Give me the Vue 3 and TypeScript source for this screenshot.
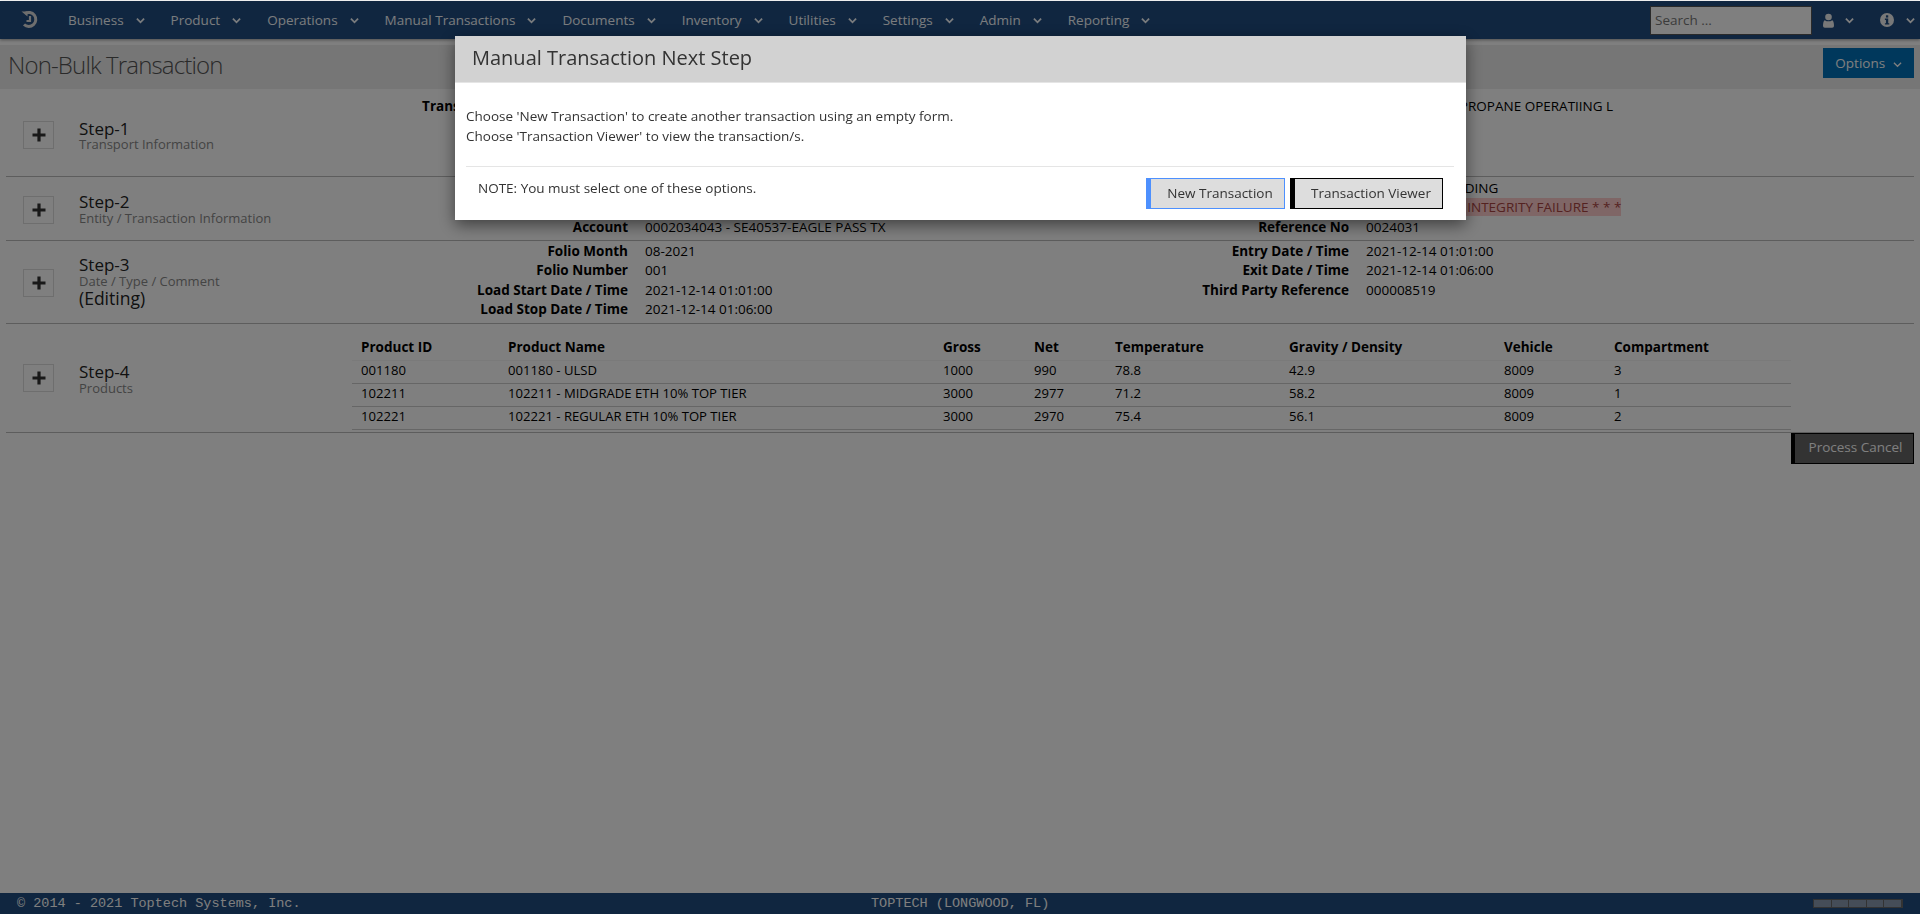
<template>
  <div class="page">
    <nav class="topNav">
      <svg class="logo" viewBox="0 0 20 20" width="20" height="20" fill="none" stroke="currentColor">
        <path d="M5 3.5 A7 7 0 1 1 4 14.5" stroke-width="3" />
        <path d="M1.5 1.5 H7.5 V6.5 Z" fill="currentColor" stroke="none" />
        <path d="M10 6 V11 H6.5" stroke-width="2.2" />
      </svg>
      <a v-for="item in menuItems" :key="item" class="navItem">
        {{ item }}
        <svg class="chev" viewBox="0 0 10 7" width="9" height="7"><path d="M1 1.5 L5 5.5 L9 1.5" /></svg>
      </a>
      <input class="searchBox" placeholder="Search ..." />
      <svg class="navIcon userIcon" viewBox="0 0 12 16" width="11" height="15" fill="currentColor">
        <circle cx="6" cy="4.2" r="3.6" />
        <path d="M1.8 7.6 Q6 10.2 10.2 7.6 Q12 9 12 14 Q12 16 10 16 H2 Q0 16 0 14 Q0 9 1.8 7.6 Z" />
      </svg>
      <svg class="chev chevUser" viewBox="0 0 10 7" width="9" height="7"><path d="M1 1.5 L5 5.5 L9 1.5" /></svg>
      <svg class="navIcon infoIcon" viewBox="0 0 16 16" width="14" height="14">
        <circle cx="8" cy="8" r="8" fill="currentColor" />
        <rect x="6.8" y="2.6" width="2.6" height="2.6" fill="#204c80" />
        <path d="M5.6 6.4 H9.4 V11.6 H10.6 V13.2 H5.6 V11.6 H6.8 V8 H5.6 Z" fill="#204c80" />
      </svg>
      <svg class="chev chevInfo" viewBox="0 0 10 7" width="9" height="7"><path d="M1 1.5 L5 5.5 L9 1.5" /></svg>
    </nav>

    <header class="titleBar">
      <h1>Non-Bulk Transaction</h1>
      <button class="optionsBtn">
        Options
        <svg class="chev" viewBox="0 0 10 7" width="9" height="7"><path d="M1 1.5 L5 5.5 L9 1.5" /></svg>
      </button>
    </header>

    <main class="steps">
      <section class="step step1">
        <div class="stepHead">
          <span class="plusBox"><svg viewBox="0 0 14 14" width="14" height="14"><path d="M5.4 0.5 H8.6 V5.4 H13.5 V8.6 H8.6 V13.5 H5.4 V8.6 H0.5 V5.4 H5.4 Z" /></svg></span>
          <div class="stepText">
            <div class="stepName">Step-1</div>
            <div class="stepSub">Transport Information</div>
          </div>
        </div>
        <dl class="fields">
          <dt>Transportation Company Code</dt>
          <dd></dd>
          <dt></dt>
          <dd>00012 - EAGLE PROPANE OPERATIING L</dd>
        </dl>
      </section>

      <section class="step step2">
        <div class="stepHead">
          <span class="plusBox"><svg viewBox="0 0 14 14" width="14" height="14"><path d="M5.4 0.5 H8.6 V5.4 H13.5 V8.6 H8.6 V13.5 H5.4 V8.6 H0.5 V5.4 H5.4 Z" /></svg></span>
          <div class="stepText">
            <div class="stepName">Step-2</div>
            <div class="stepSub">Entity / Transaction Information</div>
          </div>
        </div>
        <dl class="fields">
          <dt></dt>
          <dd></dd>
          <dt></dt>
          <dd>01 - TRUCK LOADING</dd>
          <dt></dt>
          <dd></dd>
          <dt></dt>
          <dd><span class="failure">* * * SEQUENCE INTEGRITY FAILURE * * *</span></dd>
          <dt>Account</dt>
          <dd>0002034043 - SE40537-EAGLE PASS TX</dd>
          <dt>Reference No</dt>
          <dd>0024031</dd>
        </dl>
      </section>

      <section class="step step3">
        <div class="stepHead">
          <span class="plusBox"><svg viewBox="0 0 14 14" width="14" height="14"><path d="M5.4 0.5 H8.6 V5.4 H13.5 V8.6 H8.6 V13.5 H5.4 V8.6 H0.5 V5.4 H5.4 Z" /></svg></span>
          <div class="stepText">
            <div class="stepName">Step-3</div>
            <div class="stepSub">Date / Type / Comment</div>
            <div class="stepName editing">(Editing)</div>
          </div>
        </div>
        <dl class="fields">
          <template v-for="row in dateRows" :key="row[0]">
            <dt>{{ row[0] }}</dt>
            <dd>{{ row[1] }}</dd>
            <dt>{{ row[2] }}</dt>
            <dd>{{ row[3] }}</dd>
          </template>
        </dl>
      </section>

      <section class="step step4">
        <div class="stepHead">
          <span class="plusBox"><svg viewBox="0 0 14 14" width="14" height="14"><path d="M5.4 0.5 H8.6 V5.4 H13.5 V8.6 H8.6 V13.5 H5.4 V8.6 H0.5 V5.4 H5.4 Z" /></svg></span>
          <div class="stepText">
            <div class="stepName">Step-4</div>
            <div class="stepSub">Products</div>
          </div>
        </div>
        <table class="products">
          <colgroup>
            <col v-for="w in colWidths" :key="w.key" :style="{ width: w.width + 'px' }" />
          </colgroup>
          <thead>
            <tr>
              <th v-for="h in productHeads" :key="h">{{ h }}</th>
            </tr>
          </thead>
          <tbody>
            <tr v-for="row in products" :key="row[0]">
              <td v-for="(cell, i) in row" :key="i">{{ cell }}</td>
            </tr>
          </tbody>
        </table>
      </section>

      <div class="actions">
        <button class="cancelBtn">Process Cancel</button>
      </div>
    </main>

    <footer class="footer">
      <span class="footLeft">© 2014 - 2021 Toptech Systems, Inc.</span>
      <span class="footMid">TOPTECH (LONGWOOD, FL)</span>
      <span class="footBar">
        <i v-for="n in 5" :key="n"></i>
      </span>
    </footer>

    <div class="backdrop">
      <div class="modal">
        <div class="modalHead">Manual Transaction Next Step</div>
        <div class="modalBody">
          <p>Choose 'New Transaction' to create another transaction using an empty form.</p>
          <p>Choose 'Transaction Viewer' to view the transaction/s.</p>
        </div>
        <div class="modalFoot">
          <span class="note">NOTE: You must select one of these options.</span>
          <button class="btn btnNew">New Transaction</button>
          <button class="btn btnViewer">Transaction Viewer</button>
        </div>
      </div>
    </div>
  </div>
</template>

<script setup lang="ts">
const menuItems = [
  'Business',
  'Product',
  'Operations',
  'Manual Transactions',
  'Documents',
  'Inventory',
  'Utilities',
  'Settings',
  'Admin',
  'Reporting',
];

const dateRows: string[][] = [
  ['Folio Month', '08-2021', 'Entry Date / Time', '2021-12-14 01:01:00'],
  ['Folio Number', '001', 'Exit Date / Time', '2021-12-14 01:06:00'],
  ['Load Start Date / Time', '2021-12-14 01:01:00', 'Third Party Reference', '000008519'],
  ['Load Stop Date / Time', '2021-12-14 01:06:00', '', ''],
];

const colWidths = [147, 435, 91, 81, 174, 215, 110, 186].map((width, i) => ({ key: i, width }));

const productHeads = [
  'Product ID',
  'Product Name',
  'Gross',
  'Net',
  'Temperature',
  'Gravity / Density',
  'Vehicle',
  'Compartment',
];

const products: string[][] = [
  ['001180', '001180 - ULSD', '1000', '990', '78.8', '42.9', '8009', '3'],
  ['102211', '102211 - MIDGRADE ETH 10% TOP TIER', '3000', '2977', '71.2', '58.2', '8009', '1'],
  ['102221', '102221 - REGULAR ETH 10% TOP TIER', '3000', '2970', '75.4', '56.1', '8009', '2'],
];
</script>

<style>
html,
body {
  margin: 0;
  background: #fff;
}
</style>

<style scoped>
.page {
  height: 914px;
  display: flex;
  flex-direction: column;
  font-family: 'Open Sans', 'Liberation Sans', sans-serif;
  font-size: 13.5px;
  color: #000;
  overflow: hidden;
}

.topNav {
  height: 38px;
  margin-top: 1px;
  display: flex;
  align-items: center;
  background: #204c80;
  color: #fff;
  flex: none;
  box-shadow: 0 1px 3px rgba(0, 0, 0, 0.4);
}

.logo {
  margin-left: 20px;
  margin-right: 28px;
  color: #ddd;
}

.navItem {
  display: flex;
  align-items: center;
  margin-right: 26px;
  color: #f4f8fc;
  white-space: nowrap;
}

.chev {
  margin-left: 12px;
  fill: none;
  stroke: currentColor;
  stroke-width: 2;
}

.searchBox {
  width: 162px;
  height: 29px;
  box-sizing: border-box;
  margin-left: auto;
  padding: 0 4px;
  border: 1px solid #555;
  background: #fff;
  font-family: inherit;
  font-size: 13.5px;
}

.searchBox::placeholder {
  color: #777;
}

.navIcon {
  color: #f0f0f0;
}

.userIcon {
  margin-left: 11px;
}

.chevUser {
  margin-left: 11px;
}

.infoIcon {
  margin-left: 26px;
}

.chevInfo {
  margin-left: 12px;
  margin-right: 5px;
}

.titleBar {
  height: 44px;
  margin-top: 6px;
  display: flex;
  align-items: center;
  justify-content: space-between;
  padding: 0 6px 0 8px;
  background: #ececec;
  flex: none;
}

.titleBar h1 {
  margin: -6px 0 0;
  font-size: 24px;
  font-weight: 300;
  letter-spacing: -0.85px;
  color: #555;
}

.optionsBtn {
  width: 91px;
  height: 30px;
  margin-top: -8px;
  border: 0;
  background: #0070b8;
  color: #fff;
  font-family: inherit;
  font-size: 13.5px;
}

.optionsBtn .chev {
  margin-left: 4px;
  stroke-width: 1.4;
}

.steps {
  flex: 1;
  padding: 0 6px;
}

.step {
  display: flex;
  box-sizing: border-box;
  border-bottom: 1px solid #bbb;
}

.step1 {
  height: 88px;
  padding-top: 8px;
}

.step2 {
  height: 64px;
  padding-top: 2px;
}

.step3 {
  height: 83px;
  padding-top: 1px;
}

.step4 {
  height: 109px;
  padding-top: 13px;
}

.stepHead {
  width: 280px;
  flex: none;
  display: flex;
  align-items: center;
  padding-left: 17px;
  box-sizing: border-box;
  align-self: stretch;
}

.step1 .stepHead {
  margin-top: -4px;
}

.step4 .stepHead {
  margin-top: -13px;
}

.step2 .stepText,
.step3 .stepText {
  margin-top: -3px;
}

.step1 .stepName {
  margin-top: 1px;
  margin-bottom: -1px;
}

.plusBox {
  width: 29px;
  height: 26px;
  margin-right: 25px;
  display: flex;
  align-items: center;
  justify-content: center;
  border: 1px solid #ddd;
  flex: none;
}

.plusBox svg {
  fill: #333;
}

.stepName {
  font-size: 17px;
  line-height: 20px;
  color: #222;
}

.editing {
  font-size: 17.5px;
}

.stepSub {
  font-size: 13px;
  line-height: 13px;
  color: #888;
}

.fields {
  margin: 0;
  display: grid;
  grid-template-columns: 342px 345px 342px 1fr;
  column-gap: 17px;
  grid-auto-rows: 19.3px;
  line-height: 19.3px;
  flex: 1;
}

.fields dt {
  font-weight: 700;
  text-align: right;
  white-space: nowrap;
}

.fields dd {
  margin: 0;
  white-space: nowrap;
}

.failure {
  display: inline-block;
  margin-left: -4px;
  line-height: 18px;
  background: #ffcccc;
  color: #a94442;
}

.products {
  width: 1439px;
  margin-left: 66px;
  align-self: flex-start;
  border-collapse: collapse;
  table-layout: fixed;
  font-size: 13.1px;
}

.products th {
  height: 23px;
  padding: 0 8px 2px 9px;
  box-sizing: border-box;
  text-align: left;
  font-size: 13.5px;
  font-weight: 700;
}

.products td {
  padding: 0 8px 4px 9px;
  box-sizing: border-box;
  height: 22px;
  border-bottom: 1px solid #ccc;
  white-space: nowrap;
}

.products tbody tr:first-child td {
  height: 23px;
  border-top: 1px solid #f4f4f4;
}

.actions {
  display: flex;
  justify-content: flex-end;
}

.cancelBtn {
  width: 123px;
  height: 31px;
  box-sizing: border-box;
  padding: 0 0 3px 3px;
  border: 1px solid #000;
  border-left-width: 4px;
  background: #666;
  color: #fff;
  font-family: inherit;
  font-size: 13.5px;
}

.footer {
  position: relative;
  height: 21px;
  flex: none;
  display: flex;
  align-items: center;
  justify-content: space-between;
  padding: 0 17px;
  background: #204c80;
  color: #fff;
  font-family: 'Liberation Mono', monospace;
  font-size: 13.5px;
}

.footMid {
  position: absolute;
  left: 871px;
}

.footBar {
  display: flex;
  width: 90px;
  height: 9px;
  margin-left: auto;
  border: 1px solid #666;
  box-sizing: border-box;
}

.footBar i {
  flex: 1;
  background: #8a9bb0;
  border-right: 1px solid #666;
}

.backdrop {
  position: fixed;
  inset: 0;
  top: 1px;
  background: rgba(0, 0, 0, 0.5);
}

.modal {
  position: absolute;
  left: 455px;
  top: 35px;
  width: 1011px;
  height: 184px;
  background: #fff;
  box-shadow: 0 5px 15px rgba(0, 0, 0, 0.5);
}

.modalHead {
  height: 47px;
  box-sizing: border-box;
  padding-left: 17px;
  background: #d2d2d2;
  border-bottom: 1px solid #e5e5e5;
  font-size: 20px;
  line-height: 44px;
  color: #333;
}

.modalBody {
  margin: 0 12px 0 11px;
  padding: 24px 0 20px;
  border-bottom: 1px solid #e5e5e5;
  line-height: 19.5px;
  color: #333;
}

.modalBody p {
  margin: 0;
}

.modalFoot {
  display: flex;
  align-items: flex-start;
  padding: 11px 23px 0 23px;
}

.note {
  flex: 1;
  line-height: 20px;
  color: #333;
}

.btn {
  height: 31px;
  box-sizing: border-box;
  padding: 0 0 2px 5px;
  background: #ddd;
  font-family: inherit;
  font-size: 13.5px;
  color: #333;
}

.btnNew {
  width: 139px;
  border: 1px solid #4d90fe;
  border-left-width: 5px;
}

.btnViewer {
  width: 153px;
  margin-left: 5px;
  border: 1px solid #000;
  border-left-width: 5px;
}
</style>
